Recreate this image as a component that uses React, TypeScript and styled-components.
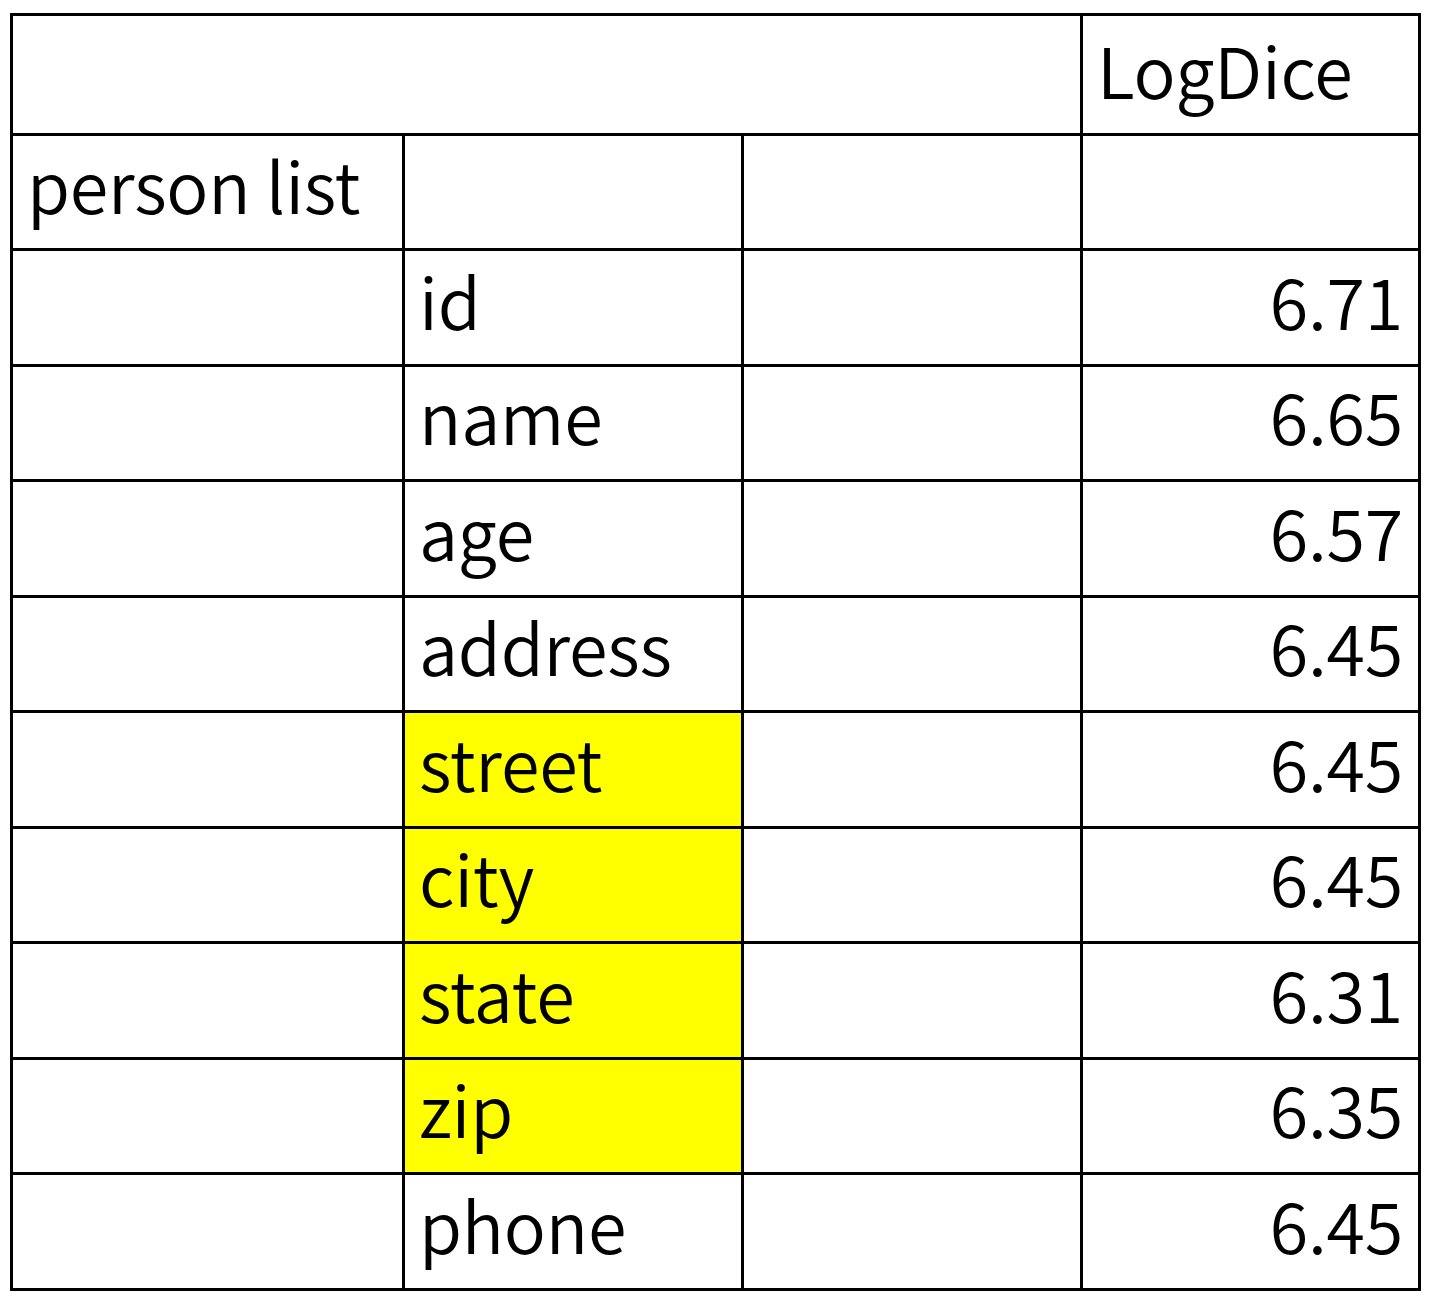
import React from "react";
import styled, { createGlobalStyle } from "styled-components";

const Global = createGlobalStyle`
  html, body { margin: 0; padding: 0; background: #ffffff; }
  body { font-family: "Noto Sans CJK JP", "Noto Sans", sans-serif; color: #000; }
`;

const Page = styled.div`
  padding: 13px 0 0 10px;
`;

const Table = styled.div`
  display: grid;
  width: max-content;
  grid-template-columns: 389px 336px 336px 335px;
  grid-template-rows: 116.5px repeat(10, 112.5px);
  gap: 3px;
  padding: 3px;
  background: #000;
`;

const Cell = styled.div<{ $span?: number; $bg?: string; $align?: "left" | "right" }>`
  grid-column: span ${(p) => p.$span ?? 1};
  background: ${(p) => p.$bg ?? "#ffffff"};
  display: flex;
  align-items: flex-end;
  justify-content: ${(p) => (p.$align === "right" ? "flex-end" : "flex-start")};
  padding: 0 15px 29px 14px;
  box-sizing: border-box;
  font-size: 70px;
  line-height: 1;
  font-weight: 350;
  letter-spacing: -0.2px;
  white-space: nowrap;
`;

const rows: { name: string; value: string; hl?: boolean }[] = [
  { name: "id", value: "6.71" },
  { name: "name", value: "6.65" },
  { name: "age", value: "6.57" },
  { name: "address", value: "6.45" },
  { name: "street", value: "6.45", hl: true },
  { name: "city", value: "6.45", hl: true },
  { name: "state", value: "6.31", hl: true },
  { name: "zip", value: "6.35", hl: true },
  { name: "phone", value: "6.45" },
];

export default function App() {
  return (
    <>
      <Global />
      <Page>
        <Table>
          <Cell $span={3} />
          <Cell>LogDice</Cell>
          <Cell>person list</Cell>
          <Cell />
          <Cell />
          <Cell />
          {rows.map((r) => (
            <React.Fragment key={r.name}>
              <Cell />
              <Cell $bg={r.hl ? "#ffff00" : undefined}>{r.name}</Cell>
              <Cell />
              <Cell $align="right">{r.value}</Cell>
            </React.Fragment>
          ))}
        </Table>
      </Page>
    </>
  );
}
